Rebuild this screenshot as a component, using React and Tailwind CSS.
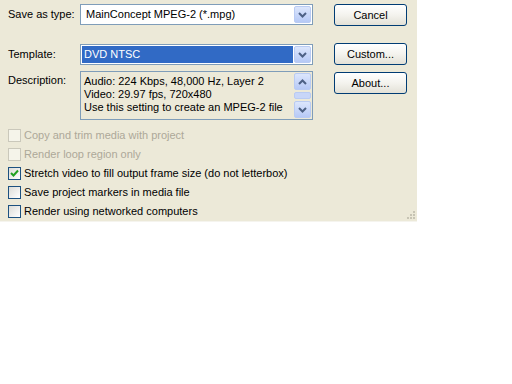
import React from 'react';

const font = { fontFamily: '"Liberation Sans", Arial, sans-serif' };

function DropArrow() {
  return (
    <div className="w-[17px] h-[17px] rounded-[2px] border border-[#B9CBF3] bg-gradient-to-b from-[#DCE6FC] to-[#B6C9F6] flex items-center justify-center">
      <svg width="9" height="6" viewBox="0 0 9 6">
        <path d="M1 1 L4.5 4.5 L8 1" fill="none" stroke="#4D6185" strokeWidth="2" />
      </svg>
    </div>
  );
}

function UpArrow() {
  return (
    <div className="w-[17px] h-[17px] rounded-[2px] border border-[#B9CBF3] bg-gradient-to-b from-[#DCE6FC] to-[#B6C9F6] flex items-center justify-center">
      <svg width="9" height="6" viewBox="0 0 9 6">
        <path d="M1 5 L4.5 1.5 L8 5" fill="none" stroke="#4D6185" strokeWidth="2" />
      </svg>
    </div>
  );
}

function Combo({ text, selected }) {
  return (
    <div className="w-[233px] h-[21px] border border-[#7F9DB9] bg-white flex items-center p-[1px]">
      <div
        className={`flex-1 h-full flex items-center pl-[2px] text-[11px] ${
          selected ? 'bg-[#316AC5] text-white' : 'text-black pl-[4px]'
        }`}
      >
        {text}
      </div>
      <div className="ml-[1px]">
        <DropArrow />
      </div>
    </div>
  );
}

function Button({ children }) {
  return (
    <button className="w-[73px] h-[22px] rounded-[3px] border border-[#003C74] bg-gradient-to-b from-white via-[#F4F3EE] to-[#E3E1D7] text-[11px] text-black flex items-center justify-center">
      {children}
    </button>
  );
}

function Check({ label, checked, disabled }) {
  return (
    <div className="flex items-center h-[19px] pl-[8px]">
      <div
        className={`w-[13px] h-[13px] border flex items-center justify-center ${
          disabled
            ? 'border-[#CAC8BB] bg-[#F5F4EA]'
            : 'border-[#1C5180] bg-gradient-to-br from-[#DCDCD7] to-white'
        }`}
      >
        {checked && (
          <svg width="9" height="9" viewBox="0 0 9 9">
            <path d="M1 4 L3.5 6.5 L8 1.5" fill="none" stroke="#21A121" strokeWidth="2" />
          </svg>
        )}
      </div>
      <span className={`ml-[3px] text-[11px] ${disabled ? 'text-[#ACA899]' : 'text-black'}`}>{label}</span>
    </div>
  );
}

export default function App() {
  return (
    <div className="w-[512px] h-[384px] bg-white" style={font}>
      <div className="relative w-[417px] h-[222px] bg-[#ECE9D8] border-b border-[#F5F4EE]">
        <div className="flex pt-[4px]">
          <div className="w-[334px]">
            <div className="flex items-center">
              <span className="w-[80px] pl-[8px] text-[11px] text-black">Save as type:</span>
              <Combo text="MainConcept MPEG-2 (*.mpg)" />
            </div>
            <div className="flex items-center mt-[19px]">
              <span className="w-[80px] pl-[8px] text-[11px] text-black">Template:</span>
              <Combo text="DVD NTSC" selected />
            </div>
            <div className="flex mt-[6px]">
              <span className="w-[80px] pl-[8px] pt-[1px] text-[11px] text-black">Description:</span>
              <div className="w-[233px] h-[49px] border border-[#7F9DB9] flex p-[1px]">
                <div className="flex-1 pl-[2px] pt-[2px] text-[11px] leading-[13px] text-black">
                  <div>Audio: 224 Kbps, 48,000 Hz, Layer 2</div>
                  <div>Video: 29.97 fps, 720x480</div>
                  <div>Use this setting to create an MPEG-2 file</div>
                </div>
                <div className="flex flex-col justify-between ml-[1px]">
                  <UpArrow />
                  <div className="h-[7px] w-[17px] rounded-[2px] border border-[#B9CBF3] bg-[#C8D6F8]" />
                  <DropArrow />
                </div>
              </div>
            </div>
          </div>
          <div className="flex flex-col gap-[17px]">
            <Button>Cancel</Button>
            <Button>Custom...</Button>
            <div className="-mt-[10px]">
              <Button>About...</Button>
            </div>
          </div>
        </div>
        <div className="mt-[6px] flex flex-col">
          <Check label="Copy and trim media with project" disabled />
          <Check label="Render loop region only" disabled />
          <Check label="Stretch video to fill output frame size (do not letterbox)" checked />
          <Check label="Save project markers in media file" />
          <Check label="Render using networked computers" />
        </div>
        <svg className="absolute right-[1px] bottom-[1px]" width="10" height="10" viewBox="0 0 10 10">
          <rect x="7" y="1" width="2" height="2" fill="#C7C4B4" />
          <rect x="4" y="4" width="2" height="2" fill="#C7C4B4" />
          <rect x="7" y="4" width="2" height="2" fill="#C7C4B4" />
          <rect x="1" y="7" width="2" height="2" fill="#C7C4B4" />
          <rect x="4" y="7" width="2" height="2" fill="#C7C4B4" />
          <rect x="7" y="7" width="2" height="2" fill="#C7C4B4" />
        </svg>
      </div>
    </div>
  );
}
